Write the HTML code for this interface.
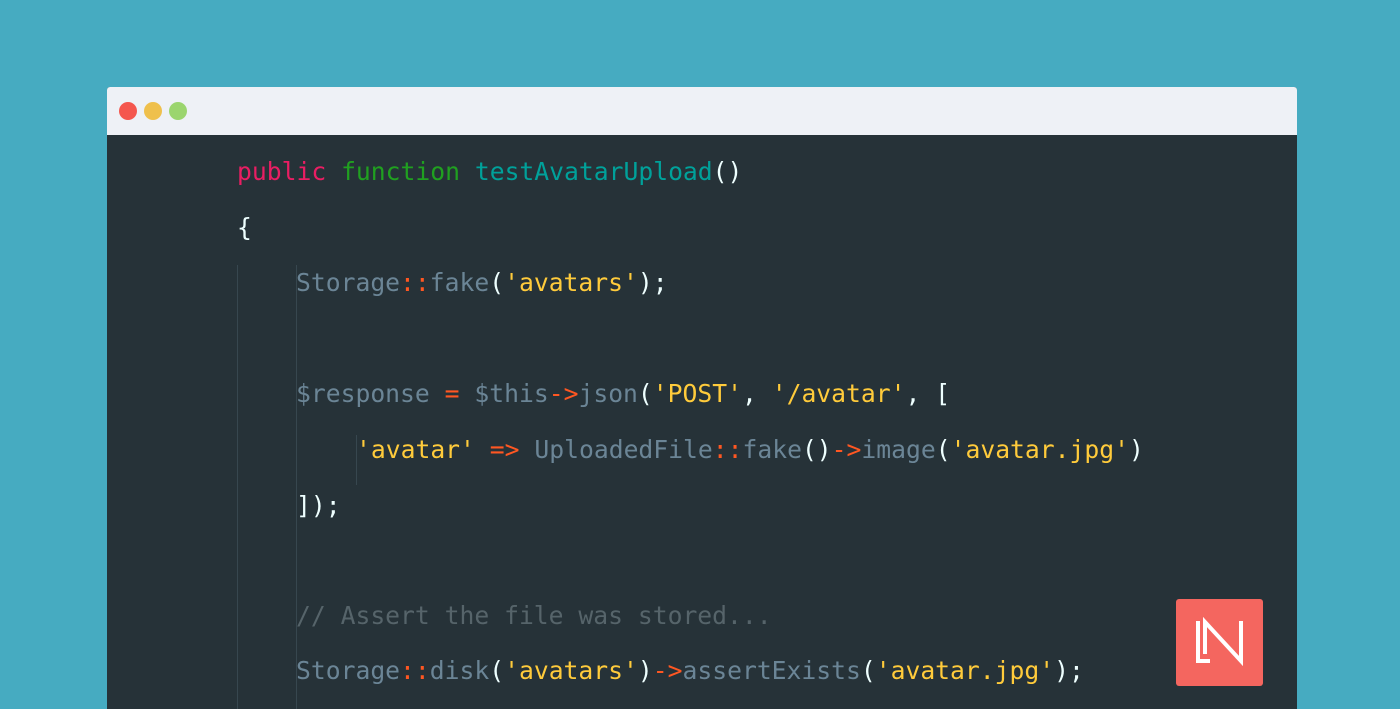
<!DOCTYPE html>
<html style="overflow:hidden"><head><style>
html,body{margin:0;width:1400px;height:709px;overflow:hidden}
body{background:#46abc1;position:relative}
.win{position:absolute;left:107px;top:87px;width:1190px;height:622px;background:#263238;border-radius:3px 3px 0 0;overflow:hidden}
.bar{height:48px;background:#eef1f6;position:relative}
.dot{position:absolute;top:15px;width:18px;height:18px;border-radius:50%}
.code{position:absolute;left:0;top:48px;right:0;bottom:0;font-family:"DejaVu Sans Mono","Liberation Mono",monospace;font-size:24.7px;color:#eeffff;overflow:hidden}
.l{position:absolute;white-space:pre;line-height:30px}
.g{position:absolute;width:1px;background:#37474f}
.k{color:#e91e63}.f{color:#20a020}.n{color:#00a19a}.v{color:#6b8596}.o{color:#ff5722}.s{color:#ffcb3b}.c{color:#56646a}.w{color:#eeffff}
</style></head><body>
<div class="win">
<div class="bar">
<div class="dot" style="left:12px;background:#f4574e"></div>
<div class="dot" style="left:37px;background:#efc04c"></div>
<div class="dot" style="left:62px;background:#9bd56e"></div>
</div>
<div class="code">
<div class="g" style="left:130px;top:130px;height:444px"></div>
<div class="g" style="left:189px;top:130px;height:444px"></div>
<div class="g" style="left:249px;top:300px;height:50px"></div>
<div class="l" style="left:130px;top:22px"><span class="k">public</span> <span class="f">function</span> <span class="n">testAvatarUpload</span>()</div>
<div class="l" style="left:130px;top:78px">{</div>
<div class="l" style="left:189px;top:133px"><span class="v">Storage</span><span class="o">::</span><span class="v">fake</span>(<span class="s">'avatars'</span>);</div>
<div class="l" style="left:189px;top:244px"><span class="v">$response</span> <span class="o">=</span> <span class="v">$this</span><span class="o">-&gt;</span><span class="v">json</span>(<span class="s">'POST'</span>, <span class="s">'/avatar'</span>, [</div>
<div class="l" style="left:249px;top:300px"><span class="s">'avatar'</span> <span class="o">=&gt;</span> <span class="v">UploadedFile</span><span class="o">::</span><span class="v">fake</span>()<span class="o">-&gt;</span><span class="v">image</span>(<span class="s">'avatar.jpg'</span>)</div>
<div class="l" style="left:189px;top:356px">]);</div>
<div class="l c" style="left:189px;top:466px">// Assert the file was stored...</div>
<div class="l" style="left:189px;top:521px"><span class="v">Storage</span><span class="o">::</span><span class="v">disk</span>(<span class="s">'avatars'</span>)<span class="o">-&gt;</span><span class="v">assertExists</span>(<span class="s">'avatar.jpg'</span>);</div>
</div>
</div>
<div style="position:absolute;left:1176px;top:599px;width:87px;height:87px;background:#f4665f;border-radius:3px">
<svg width="87" height="87" viewBox="0 0 87 87"><path d="M22 22V62H34M29 55V23L65 62V22" fill="none" stroke="#fff" stroke-width="4"/></svg>
</div>
</body></html>
